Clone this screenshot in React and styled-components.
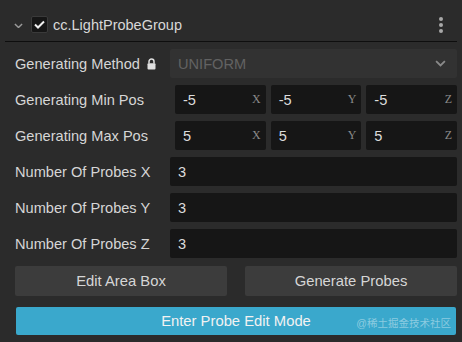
import React from 'react';
import styled, { createGlobalStyle } from 'styled-components';

const Global = createGlobalStyle`
  html, body {
    margin: 0;
    padding: 0;
    background: #2b2b2b;
  }
  body {
    font-family: "Liberation Sans", Arial, sans-serif;
    color: #d4d4d4;
  }
`;

const Panel = styled.div`
  width: 462px;
  height: 342px;
  background: #2b2b2b;
  position: relative;
  overflow: hidden;
`;

const Header = styled.div`
  height: 33px;
  margin: 0 5px;
  padding: 8px 0 0 6px;
  border-bottom: 1px solid #0e0e0e;
  display: flex;
  align-items: center;
`;

const Fold = styled.span`
  width: 14px;
  display: flex;
  align-items: center;
  justify-content: center;
  margin-right: 6px;
  margin-top: 2px;
`;

const Check = styled.span`
  width: 15px;
  height: 15px;
  border-radius: 2px;
  background: #161616;
  border: 1px solid #3a3a3a;
  display: flex;
  align-items: center;
  justify-content: center;
  margin-right: 5px;
`;

const Title = styled.span`
  font-size: 14.5px;
  color: #d8d8d8;
  flex: 1;
`;

const Menu = styled.span`
  width: 20px;
  display: flex;
  flex-direction: column;
  align-items: center;
  gap: 2px;
  margin-right: 6px;
  i {
    width: 4px;
    height: 4px;
    border-radius: 50%;
    background: #a8a8a8;
  }
`;

const Body = styled.div`
  padding: 7px 5px 0 15px;
  display: flex;
  flex-direction: column;
  gap: 7px;
`;

const Row = styled.div`
  display: grid;
  grid-template-columns: 155px 1fr;
  height: 29px;
  align-items: center;
`;

const Label = styled.div`
  font-size: 14.6px;
  color: #d6d6d6;
  display: flex;
  align-items: center;
  gap: 7px;
`;

const Select = styled.div`
  height: 29px;
  background: #323232;
  border-radius: 2px;
  display: flex;
  align-items: center;
  justify-content: space-between;
  padding: 0 11px 0 8px;
  font-size: 14.6px;
  color: #626262;
`;

const Vector = styled.div`
  display: grid;
  grid-template-columns: repeat(3, 1fr);
  gap: 5px;
  padding-left: 5px;
  height: 29px;
`;

const Field = styled.div`
  height: 29px;
  background: #161616;
  border-radius: 2px;
  display: flex;
  align-items: center;
  justify-content: space-between;
  padding: 0 5px 0 8px;
  font-size: 14.6px;
  color: #dcdcdc;
`;

const Axis = styled.span`
  font-family: "Liberation Serif", "Times New Roman", serif;
  font-size: 12px;
  color: #8a8a8a;
`;

const Buttons = styled.div`
  display: grid;
  grid-template-columns: 1fr 1fr;
  gap: 18px;
  margin-top: 1px;
  height: 30px;
`;

const Button = styled.div`
  background: #3c3c3c;
  border-radius: 2px;
  display: flex;
  align-items: center;
  justify-content: center;
  font-size: 14.8px;
  color: #d6d6d6;
`;

const Primary = styled.div`
  margin: 4px 1px 0 1px;
  height: 28px;
  background: #3aa8cc;
  border-radius: 2px;
  display: flex;
  align-items: center;
  justify-content: center;
  font-size: 14.8px;
  color: #f2f2f2;
`;

const Mark = styled.span`
  position: absolute;
  right: 11px;
  bottom: 12px;
  font-size: 10.5px;
  color: rgba(255, 255, 255, 0.42);
  font-family: "Liberation Sans", "Noto Sans CJK SC", sans-serif;
`;

const Lock = () => (
  <svg width="9" height="12" viewBox="0 0 9 12">
    <path d="M2 5.5V3.6A2.5 2.5 0 0 1 7 3.6V5.5" fill="none" stroke="#e0e0e0" strokeWidth="1.5" />
    <rect x="0.5" y="5.2" width="8" height="6.3" rx="1" fill="#e0e0e0" />
  </svg>
);

const Chevron = ({ color = '#9a9a9a', w = 10 }) => (
  <svg width={w} height={w * 0.6} viewBox="0 0 10 6">
    <path d="M1 1l4 4 4-4" fill="none" stroke={color} strokeWidth="1.6" />
  </svg>
);

const VecRow = ({ label, v }) => (
  <Row>
    <Label>{label}</Label>
    <Vector>
      {['X', 'Y', 'Z'].map(a => (
        <Field key={a}>
          <span>{v}</span>
          <Axis>{a}</Axis>
        </Field>
      ))}
    </Vector>
  </Row>
);

export default function App() {
  return (
    <Panel>
      <Global />
      <Header>
        <Fold>
          <Chevron color="#9a9a9a" w={9} />
        </Fold>
        <Check>
          <svg width="11" height="9" viewBox="0 0 11 9">
            <path d="M1 4.5l3 3 6-6" fill="none" stroke="#f0f0f0" strokeWidth="2" />
          </svg>
        </Check>
        <Title>cc.LightProbeGroup</Title>
        <Menu>
          <i />
          <i />
          <i />
        </Menu>
      </Header>
      <Body>
        <Row>
          <Label>
            Generating Method <Lock />
          </Label>
          <Select>
            <span>UNIFORM</span>
            <Chevron color="#8a8a8a" w={11} />
          </Select>
        </Row>
        <VecRow label="Generating Min Pos" v="-5" />
        <VecRow label="Generating Max Pos" v="5" />
        {['X', 'Y', 'Z'].map(a => (
          <Row key={a}>
            <Label>Number Of Probes {a}</Label>
            <Field>3</Field>
          </Row>
        ))}
        <Buttons>
          <Button>Edit Area Box</Button>
          <Button>Generate Probes</Button>
        </Buttons>
        <Primary>Enter Probe Edit Mode</Primary>
      </Body>
      <Mark>@稀土掘金技术社区</Mark>
    </Panel>
  );
}
